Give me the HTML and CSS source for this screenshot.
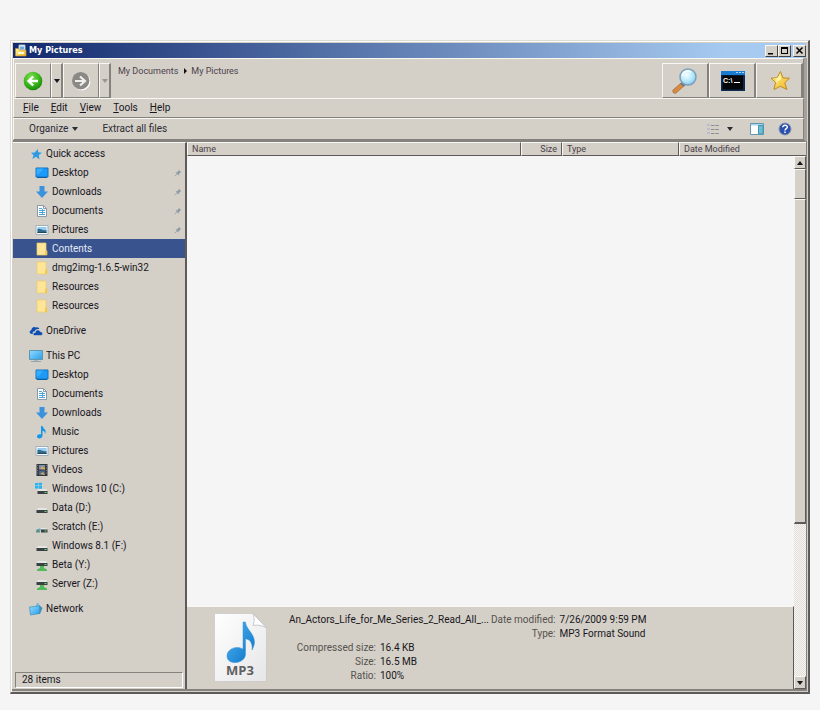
FILE: index.html
```html
<!DOCTYPE html>
<html lang="en">
<head>
<meta charset="utf-8">
<title>My Pictures</title>
<link rel="stylesheet" href="styles.css">
</head>
<body>
<svg class="defs" aria-hidden="true">
  <defs>
    <linearGradient id="gold" x1="0" y1="0" x2="1" y2="1"><stop offset="0" stop-color="#fff49a"/><stop offset="1" stop-color="#efb51c"/></linearGradient>
    <linearGradient id="blue" x1="0" y1="0" x2="1" y2="1"><stop offset="0" stop-color="#54b9f2"/><stop offset="1" stop-color="#0870c8"/></linearGradient>
    <linearGradient id="paper" x1="0" y1="0" x2="1" y2="1"><stop offset="0" stop-color="#fff"/><stop offset="1" stop-color="#e6e6e8"/></linearGradient>
    <linearGradient id="screen" x1="0" y1="0" x2="1" y2="1"><stop offset="0" stop-color="#8fdcff"/><stop offset="1" stop-color="#2a9eea"/></linearGradient>
    <radialGradient id="green" cx=".4" cy=".3" r=".75"><stop offset="0" stop-color="#7be04f"/><stop offset=".6" stop-color="#37b41c"/><stop offset="1" stop-color="#178008"/></radialGradient>
    <radialGradient id="lens" cx=".4" cy=".35" r=".7"><stop offset="0" stop-color="#f4ffff"/><stop offset=".6" stop-color="#b6e8fa"/><stop offset="1" stop-color="#7cc3ee"/></radialGradient>
    <symbol id="star" viewBox="0 0 14 14"><path d="M8.800 2l.4 3.300 3.800.5-3.200 2.200.6 4.500-3.300-2.800L3.300 12l1.300-3.800L2 5.800l3.700-.3z" fill="#2b9be4"/></symbol>
    <symbol id="desktop" viewBox="0 0 14 14"><path d="M1 2h12v9H1z" fill="#1b9af7" stroke="#1572bd"/><path d="M1.500 2.500h7l-5 6h-2z" fill="#35acff"/><path d="M2 11.500h10" stroke="#0b5e9f"/></symbol>
    <symbol id="download" viewBox="0 0 14 14"><path d="M4.500 1h5v5.500H13L7 13 1 6.500h3.500z" fill="#3a93dc"/></symbol>
    <symbol id="document" viewBox="0 0 14 14"><path d="M2.500 1.500h6l3 3v8h-9z" fill="#fbfdff" stroke="#8c9aa5"/><path d="M8.500 1.500v3h3" fill="none" stroke="#8c9aa5"/><path d="M4 4.500h3M4 6.500h6M4 8.500h3m1 0h2M4 10.500h6M7.500 5v5" stroke="#4ba6da"/></symbol>
    <symbol id="picture" viewBox="0 0 14 14"><path d="M1 2.500h12v9H1z" fill="#f8fbff" stroke="#a0afba"/><path d="M2.500 4h9v6h-9z" fill="#95cdf1"/><path d="M2.500 6c3-1 5 2 9 1v3h-9z" fill="#33698a"/><path d="M2.500 9h9v1h-9z" fill="#254a55"/></symbol>
    <symbol id="folder" viewBox="0 0 14 14"><path d="M2 1h9v7.500l1 1V13H2z" fill="#ffe597" stroke="#edcb67" stroke-width=".7"/><path d="M10 9l2-1v5h-2z" fill="#f2c84d"/></symbol>
    <symbol id="cloud" viewBox="0 0 14 14"><path d="M3 10C0 10-.1 6.700 2.300 6.300 2.200 3.500 5 2 7 3.500 8.500 2.800 10 3.600 10.300 5 7.500 4.500 6 6 5.800 7.300 4 7 3.200 8.700 4 10z" fill="#0d4eb2"/><path d="M5.500 11.500c-2-.3-1.800-3 .8-3 .2-3 3.800-3.600 5-.8 2.700-.3 3.300 3.500.6 3.800z" fill="#0d4eb2" stroke="#d4cfc7" stroke-width=".6"/></symbol>
    <symbol id="pc" viewBox="0 0 14 14"><path d="M.5 1.500h13v9H.5z" fill="url(#screen)" stroke="#6194ad"/><path d="M5 11h4v1H5z" fill="#a7b8c1"/><path d="M2 12.500h10" stroke="#8fa4af"/></symbol>
    <symbol id="music" viewBox="0 0 14 14"><path d="M6 1h1.500c.5 3 4.700 3.500 2.500 8C10 6.500 8.800 6 7.500 5.800V10.500C7.500 14 2 14.500 2 11.500 2 9.500 4.500 8.700 6 9.500z" fill="#1296e8"/></symbol>
    <symbol id="video" viewBox="0 0 14 14"><path d="M1.500 1h11v12h-11z" fill="#35373b"/><path d="M4 2h6v4.500H4z" fill="#718fb7"/><path d="M4 7.500h6V12H4z" fill="#4a6693"/><path d="M5 6l2-3 3 2v1.500zM5 11l3-2 2 3z" fill="#d0a958"/><path d="M2.700 2v10M11.300 2v10" stroke="#aaa" stroke-width=".7" stroke-dasharray="1 1.500"/></symbol>
    <symbol id="drive" viewBox="0 0 14 14"><path d="M3 7h8l1.500 2h-11z" fill="#e5e7e7"/><path d="M1.500 9h11v3h-11z" fill="#3b4043"/><path d="M9.500 10.500h2" stroke="#5ddb73"/></symbol>
    <symbol id="windrive" viewBox="0 0 14 14"><path d="M0 1h3v2.500H0zM3.500.7H7v2.800H3.500zM0 4h3v2.500H0zM3.500 4H7v2.800H3.500z" fill="#27b6ef"/><path d="M3.500 7H11l1.500 2h-10z" fill="#e5e7e7"/><path d="M2.500 9h10v3h-10z" fill="#3b4043"/><path d="M9.500 10.500h2" stroke="#5ddb73"/></symbol>
    <symbol id="shared" viewBox="0 0 14 14"><path d="M3 8h8l1.500 1.500h-11z" fill="#e5e7e7"/><path d="M6 9.500h6.500v3H6z" fill="#3b4043"/><path d="M1 12.500c0-3 1-3.500 2-3.500s2 1 2 3.500z" fill="#53908e"/><circle cx="4.500" cy="9.500" r="1.300" fill="#71a3b1"/><path d="M9.500 11h2" stroke="#5ddb73"/></symbol>
    <symbol id="netdrive" viewBox="0 0 14 14"><path d="M3 3h8l1.500 2h-11z" fill="#e5e7e7"/><path d="M1.500 5h11v3h-11z" fill="#3b4043"/><path d="M9.500 6.500h2" stroke="#5ddb73"/><path d="M5 8h4v2l3 1.500V13H2v-1.500L5 10z" fill="#54b95b"/></symbol>
    <symbol id="network" viewBox="0 0 14 14"><path d="M8 1l5.500 5L11 12H8z" fill="#3c91bd"/><path d="M7 2l3-1v10H7z" fill="#78bbdb"/><path d="M.5 5l10-1v7.500l-9 1.500z" fill="url(#screen)" stroke="#438fb9" stroke-width=".7"/></symbol>
    <symbol id="pin" viewBox="0 0 10 10"><path d="M6 1l3 3-1 .5-2 2v2L1.800 4.200h2l2-2z" fill="#8d9ba5"/><path d="M4 6L1 9" stroke="#8d9ba5"/></symbol>
  </defs>
</svg>
<main class="window">
  <header class="titlebar">
    <svg class="title-icon" viewBox="0 0 12 12"><path d="M4 .5h6v6H4z" fill="#fff" stroke="#a9bad1"/><path d="M5 2h4v3H5z" fill="#67a8dc"/><path d="M.5 4h3l1 1.500h6.500v6H.5z" fill="url(#gold)" stroke="#b89142" stroke-width=".7"/><path d="M3 7.500h6v2H3z" fill="#fff8dc"/></svg>
    <h1>My Pictures</h1>
    <button class="caption" aria-label="Minimize"><svg viewBox="0 0 9 9"><path d="M1 7h5v1.500H1z"/></svg></button>
    <button class="caption" aria-label="Maximize"><svg viewBox="0 0 9 9"><path d="M1 1h7v7H1zM2 3v4h5V3z" fill-rule="evenodd"/></svg></button>
    <button class="caption close" aria-label="Close"><svg viewBox="0 0 9 9"><path d="M1.500 1.500l6 6m0-6l-6 6" stroke="#000" stroke-width="1.500"/></svg></button>
  </header>

  <div class="bars">
    <div class="navbar">
      <button class="tool nav" aria-label="Back"><svg viewBox="0 0 20 20"><circle cx="10" cy="10" r="9.300" fill="url(#green)"/><path d="M15 10H6m4.200-4.500L5.500 10l4.700 4.500" fill="none" stroke="#fff" stroke-width="2.400"/></svg></button>
      <button class="tool drop" aria-label="Back history"><i class="arrow"></i></button>
      <button class="tool nav" aria-label="Forward" disabled><svg viewBox="0 0 20 20"><circle cx="10.700" cy="10.700" r="8.700" fill="#fff"/><circle cx="9.700" cy="9.700" r="8.700" fill="#8b8985"/><path d="M4 10h9M9 5.500l5 4.500-5 4.500" fill="none" stroke="#f1efeb" stroke-width="2.200"/></svg></button>
      <button class="tool drop" aria-label="Forward history" disabled><i class="arrow"></i></button>
      <nav class="crumbs" aria-label="Location"><a href="#">My Documents</a><i class="crumb-arrow"></i><a href="#">My Pictures</a></nav>
      <button class="tool action" aria-label="Search"><svg viewBox="0 0 28 28"><path d="M10 16l3 3-8 7c-2 1-4-1-3-3z" fill="#d98a3d" stroke="#9a6b47" stroke-width=".7"/><path d="M10 16l3.500 3" stroke="#687582" stroke-width="2"/><circle cx="17" cy="10" r="8" fill="url(#lens)" stroke="#7b9fba" stroke-width="1.500"/><path d="M11 9c1-5 6-6 9-4" fill="none" stroke="#fff" stroke-width="1.500"/></svg></button>
      <button class="tool action" aria-label="Command prompt"><svg viewBox="0 0 28 28"><path d="M3 4h24v20H3z" fill="#102a4f"/><path d="M3 4h24v4H3z" fill="#197bd3"/><path d="M18 5h2v1h-2zm3 0h2v1h-2zm3 0h2v1h-2z" fill="#a8d8ff"/><path d="M4.500 8.500h20.500v14H4.500z" fill="#050609"/><text x="5" y="16" class="prompt">C:\</text><path d="M16 15.500h6" stroke="#fff"/></svg></button>
      <button class="tool action" aria-label="Favorites"><svg viewBox="0 0 28 28"><path d="M15.500 4.500l2.500 6.500 6.500.2-4.800 4.500 2.300 6.800-6.700-3.200L9 22.500l1.500-7L6 11.200l6.200-.5z" fill="url(#gold)" stroke="#c18a23" stroke-linejoin="round"/><path d="M15 7l1 5-5 4 .8-4-3-1 4-.2z" fill="#fff7a8"/></svg></button>
    </div>
    <div class="menubar">
      <button><u>F</u>ile</button><button><u>E</u>dit</button><button><u>V</u>iew</button><button><u>T</u>ools</button><button><u>H</u>elp</button>
    </div>
    <div class="commands">
      <button>Organize <i class="arrow"></i></button>
      <button class="extract">Extract all files</button>
      <button class="view" aria-label="Change view"><svg viewBox="0 0 14 14"><path d="M1 2h3v2H1zm0 4h3v2H1zm0 4h3v2H1z" fill="#b7bdcf"/><path d="M5 3.500h8M5 7.500h8M5 11.500h8" stroke="#8c8e91" stroke-dasharray="3.500 .8"/></svg><i class="arrow"></i></button>
      <button aria-label="Preview pane"><svg viewBox="0 0 14 14"><path d="M.5 1.500h13v11H.5z" fill="#fff" stroke="#6297af"/><path d="M1 2h12v1.500H1z" fill="#a6d5e7"/><path d="M8.500 3.500H13V12H8.500z" fill="#6bc0d3" stroke="#4796af"/></svg></button>
      <button class="help" aria-label="Help"><svg viewBox="0 0 14 14"><circle cx="7" cy="7" r="6" fill="#2b50ad" stroke="#8794b3"/><path d="M4.700 5.300C4.700 2.500 9.500 2.600 9.300 5.200 9.200 6.700 7 6.700 7 8.500M7 9.500v1.600" fill="none" stroke="#fff" stroke-width="1.500"/></svg></button>
    </div>
  </div>

  <div class="content">
    <aside class="sidebar">
      <nav aria-label="Folders">
        <ul>
          <li class="root"><a href="#"><svg><use href="#star"/></svg>Quick access</a></li>
          <li><a href="#"><svg><use href="#desktop"/></svg>Desktop<svg class="pin"><use href="#pin"/></svg></a></li>
          <li><a href="#"><svg><use href="#download"/></svg>Downloads<svg class="pin"><use href="#pin"/></svg></a></li>
          <li><a href="#"><svg><use href="#document"/></svg>Documents<svg class="pin"><use href="#pin"/></svg></a></li>
          <li><a href="#"><svg><use href="#picture"/></svg>Pictures<svg class="pin"><use href="#pin"/></svg></a></li>
          <li><a href="#" class="selected" aria-current="page"><svg><use href="#folder"/></svg>Contents</a></li>
          <li><a href="#"><svg><use href="#folder"/></svg>dmg2img-1.6.5-win32</a></li>
          <li><a href="#"><svg><use href="#folder"/></svg>Resources</a></li>
          <li><a href="#"><svg><use href="#folder"/></svg>Resources</a></li>
        </ul>
        <ul><li class="root"><a href="#"><svg><use href="#cloud"/></svg>OneDrive</a></li></ul>
        <ul>
          <li class="root"><a href="#"><svg><use href="#pc"/></svg>This PC</a></li>
          <li><a href="#"><svg><use href="#desktop"/></svg>Desktop</a></li>
          <li><a href="#"><svg><use href="#document"/></svg>Documents</a></li>
          <li><a href="#"><svg><use href="#download"/></svg>Downloads</a></li>
          <li><a href="#"><svg><use href="#music"/></svg>Music</a></li>
          <li><a href="#"><svg><use href="#picture"/></svg>Pictures</a></li>
          <li><a href="#"><svg><use href="#video"/></svg>Videos</a></li>
          <li><a href="#"><svg><use href="#windrive"/></svg>Windows 10 (C:)</a></li>
          <li><a href="#"><svg><use href="#drive"/></svg>Data (D:)</a></li>
          <li><a href="#"><svg><use href="#shared"/></svg>Scratch (E:)</a></li>
          <li><a href="#"><svg><use href="#drive"/></svg>Windows 8.1 (F:)</a></li>
          <li><a href="#"><svg><use href="#netdrive"/></svg>Beta (Y:)</a></li>
          <li><a href="#"><svg><use href="#netdrive"/></svg>Server (Z:)</a></li>
        </ul>
        <ul><li class="root"><a href="#"><svg><use href="#network"/></svg>Network</a></li></ul>
      </nav>
      <p class="status">28 items</p>
    </aside>

    <section class="files">
      <table>
        <thead><tr><th>Name</th><th class="size">Size</th><th class="type">Type</th><th class="date">Date Modified</th></tr></thead>
      </table>
      <div class="viewport">
        <div class="main">
          <div class="listing"></div>
          <div class="details">
            <svg class="mp3" viewBox="0 0 53 69"><path d="M.5.500h38.500L52.500 14v54.500H.5z" fill="url(#paper)" stroke="#c3c1bf" stroke-width=".6"/><path d="M39 .5c2 5 1 9 0 12 5-1 9 0 13 2z" fill="#fff" stroke="#bbb" stroke-width=".8"/><path d="M29 9h2.500C32 18 46 23 38 37c1-8-3-11-6.500-11v15C31.500 51 13 53 13 43c0-7 9-11 16-7z" fill="url(#blue)" stroke="#3a91cc" stroke-width=".5"/><text x="26" y="62" text-anchor="middle" class="mp3-label">MP3</text></svg>
            <div class="facts first">
              <h2>An_Actors_Life_for_Me_Series_2_Read_All_...</h2>
              <dl><dt>Compressed size:</dt><dd>16.4 KB</dd><dt>Size:</dt><dd>16.5 MB</dd><dt>Ratio:</dt><dd>100%</dd></dl>
            </div>
            <dl class="facts"><dt>Date modified:</dt><dd>7/26/2009 9:59 PM</dd><dt>Type:</dt><dd>MP3 Format Sound</dd></dl>
          </div>
        </div>
        <div class="scrollbar">
          <button class="step" aria-label="Scroll up"><i class="arrow up"></i></button>
          <div class="thumb short"></div>
          <div class="thumb long"></div>
          <div class="track"></div>
          <button class="step" aria-label="Scroll down"><i class="arrow"></i></button>
        </div>
      </div>
    </section>
  </div>
</main>
</body>
</html>
```
FILE: styles.css
```css
:root {
  --face: #d4cfc7;
  --light: #f8f7f4;
  --shade: #85827d;
  --dark: #5c5b59;
  --ui: Roboto, "Open Sans", sans-serif;
}
* { box-sizing: border-box; }
body {
  margin: 0;
  min-height: 100vh;
  padding: 40px 10px 16px;
  display: flex;
  background: #f5f5f5;
  font: 10px/14px var(--ui);
  color: #16161e;
}
h1, h2, p, ul, dl, dd { margin: 0; padding: 0; }
ul { list-style: none; }
a { color: inherit; text-decoration: none; }
button { font: inherit; color: inherit; padding: 0; border: 0; background: none; }
svg { display: block; flex: none; }
.defs { position: absolute; width: 0; height: 0; }

.window {
  flex: 1;
  min-width: 0;
  display: flex;
  flex-direction: column;
  padding: 1px;
  background: var(--face);
  border: 1px solid #dedbd5;
  border-right: 2px solid var(--dark);
  border-bottom: 2px solid var(--dark);
  box-shadow: inset 1px 1px #fff;
}
.titlebar {
  display: flex;
  align-items: center;
  height: 15px;
  margin: 1px 1px 0;
  padding-left: 2px;
  background: linear-gradient(90deg, #12296d, #a6caf0 90%);
}
.title-icon { width: 12px; height: 13px; }
.titlebar h1 {
  flex: 1;
  margin-left: 2px;
  color: #fff;
  font: bold 9px/15px "DejaVu Sans Condensed", "DejaVu Sans", sans-serif;
}
.caption {
  width: 13px;
  height: 12px;
  display: grid;
  place-items: center;
  background: var(--face);
  border: 1px solid var(--light);
  border-right-color: #444;
  border-bottom-color: #444;
}
.caption svg { width: 9px; height: 9px; }
.caption.close { margin-left: 2px; }

.bars { border-right: 3px solid #a5a19b; border-bottom: 2px solid var(--shade); margin-left: 1px; }
.navbar, .menubar, .commands {
  display: flex;
  border-top: 1px solid var(--light);
  border-left: 1px solid var(--light);
  border-right: 1px solid var(--shade);
}
.navbar { height: 40px; padding: 4px 0 0 1px; }
.tool {
  display: grid;
  place-items: center;
  border: 1px solid var(--light);
  border-right-color: var(--shade);
  border-bottom-color: var(--shade);
}
.nav { width: 36px; }
.nav svg { width: 20px; height: 20px; }
.drop { width: 12px; border-right: 2px solid var(--shade); }
.drop:disabled { color: #99958f; }
.arrow {
  width: 0;
  height: 0;
  border: 3px solid transparent;
  border-top: 4px solid currentColor;
  border-bottom: 0;
}
.arrow.up { border-top: 0; border-bottom: 4px solid currentColor; }
.crumbs { flex: 1; display: flex; padding: 1px 0 0 7px; font-size: 9px; color: #4c424d; }
.crumb-arrow { width: 0; height: 0; margin: 4px 4px 0 6px; border: 3px solid transparent; border-left-color: #111; border-right: 0; }
.action { width: 47px; border-right: 2px solid var(--shade); }
.action svg { width: 28px; height: 28px; }
.prompt { font: bold 7px "Liberation Sans", sans-serif; fill: #fff; }
.menubar { height: 20px; padding-left: 9px; gap: 12px; border-bottom: 1px solid var(--shade); }
.commands { height: 22px; padding: 0 11px 0 15px; align-items: center; border-bottom: 1px solid var(--shade); color: #2c2b33; }
.commands button { display: flex; align-items: center; gap: 4px; }
.commands svg { width: 14px; height: 14px; }
.commands .extract { margin-left: 24px; }
.commands .view { margin-left: auto; margin-right: 17px; gap: 7px; }
.commands .help { margin-left: 14px; }

.content { flex: 1; min-height: 0; display: flex; padding-left: 1px; border-right: 1px solid var(--shade); border-bottom: 2px solid var(--shade); }
.sidebar { width: 174px; flex: none; display: flex; flex-direction: column; padding-top: 1px; border-top: 1px solid var(--light); border-right: 2px solid var(--dark); }
.sidebar nav { flex: 1; }
.sidebar ul + ul { margin-top: 6px; }
.sidebar a { display: flex; align-items: center; gap: 3px; height: 19px; padding: 0 3px 0 22px; }
.sidebar .root a { padding-left: 16px; }
.sidebar a svg { width: 14px; height: 14px; }
.sidebar a .pin { width: 8px; height: 8px; margin-left: auto; }
.sidebar .selected { color: #e6ebf6; background: #38538e; }
.status { margin: 0 2px 1px; padding: 0 6px; border: 1px solid var(--shade); border-right-color: #fff; border-bottom-color: #fff; }

.files { flex: 1; min-width: 0; display: flex; flex-direction: column; }
table { width: 100%; table-layout: fixed; border-collapse: separate; border-spacing: 0; }
th {
  height: 14px;
  padding: 0 4px;
  text-align: left;
  font: 9px/12px var(--ui);
  color: #493f49;
  border-top: 1px solid var(--light);
  border-left: 1px solid var(--light);
  border-right: 1px solid var(--dark);
  border-bottom: 1px solid var(--dark);
}
th.size { width: 41px; text-align: right; }
th.type { width: 117px; }
th.date { width: 127px; border-right: 0; }
.viewport { flex: 1; display: flex; min-height: 0; }
.main { flex: 1; min-width: 0; display: flex; flex-direction: column; }
.listing { flex: 1; background: #f5f5f5; }
.details { display: flex; height: 83px; padding: 6px 8px 6px 27px; border-top: 1px solid var(--light); border-right: 1px solid var(--dark); color: #17171c; }
.mp3 { width: 53px; height: 69px; }
.mp3-label { font: bold 13px "Open Sans", sans-serif; fill: #5f6063; }
.facts.first { width: 200px; margin: 0 2px 0 22px; }
.facts h2 { font: inherit; white-space: nowrap; margin-bottom: 14px; }
.details dl { display: grid; grid-template-columns: 87px auto; grid-auto-rows: 14px; column-gap: 4px; }
.details dl.facts { grid-template-columns: auto auto; align-content: start; }
.details dt { text-align: right; white-space: nowrap; color: #55534f; }

.scrollbar { width: 12px; display: flex; flex-direction: column; background: #eae8e5; }
.step, .thumb { border: 1px solid var(--light); border-right-color: var(--dark); border-bottom-color: var(--dark); background: var(--face); }
.step { height: 13px; display: grid; place-items: center; }
.thumb.short { height: 30px; }
.thumb.long { flex: 325; border-bottom-width: 2px; }
.track { flex: 153; background: repeating-conic-gradient(#f5f4f2 0 25%, #e2dfda 0 50%) 0 0 / 2px 2px; }
```
